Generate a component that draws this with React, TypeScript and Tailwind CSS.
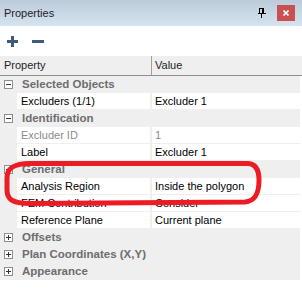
import React from "react";

const font = { fontFamily: '"Liberation Sans", Arial, sans-serif' };

function Expander({ open }: { open: boolean }) {
  return (
    <div className="w-[9px] h-[9px] border border-[#8e8f8f] bg-white relative flex items-center justify-center">
      <div className="w-[5px] h-[1px] bg-[#333] absolute" />
      {!open && <div className="w-[1px] h-[5px] bg-[#333] absolute" />}
    </div>
  );
}

function Category({ label, open }: { label: string; open: boolean }) {
  return (
    <div className="h-[17px] flex items-center bg-[#efefef]">
      <div className="w-[17px] pl-[4px] flex items-center">
        <Expander open={open} />
      </div>
      <span className="pl-[5px] text-[11.5px] font-bold text-[#6d6d6d] leading-[17px]">{label}</span>
    </div>
  );
}

function Prop({ name, value, readOnly }: { name: string; value: string; readOnly?: boolean }) {
  const c = readOnly ? "text-[#8a8a8a]" : "text-black";
  return (
    <div className="h-[17px] flex bg-[#efefef] pb-[1px]">
      <div className="w-[17px]" />
      <div className={`w-[133px] bg-white pl-[4px] text-[11px] leading-[16px] ${c}`}>{name}</div>
      <div className="w-[2px]" />
      <div className={`flex-1 bg-white pl-[3px] text-[11px] leading-[16px] ${c}`}>{value}</div>
    </div>
  );
}

export default function App() {
  return (
    <div className="relative w-[302px] h-[289px] bg-white overflow-hidden" style={font}>
      {/* Title bar */}
      <div className="h-[26px] flex items-center bg-gradient-to-b from-[#bccbdb] to-[#d7e3ef]">
        <span className="pl-[4px] text-[11px] text-[#1e1e1e]">Properties</span>
        <div className="flex-1" />
        <svg width="8" height="10" viewBox="0 0 8 10" className="mr-[11px]">
          <rect x="1.5" y="0.5" width="4" height="5" fill="none" stroke="black" />
          <rect x="4" y="0" width="2" height="6" fill="black" />
          <rect x="0" y="5" width="8" height="1" fill="black" />
          <rect x="3" y="6" width="1" height="4" fill="black" />
        </svg>
        <div className="w-[18px] h-[16px] bg-[#c75050] mr-[7px] flex items-center justify-center">
          <svg width="6" height="6" viewBox="0 0 6 6">
            <path d="M0.5 0.5 L5.5 5.5 M5.5 0.5 L0.5 5.5" stroke="white" strokeWidth="1.6" />
          </svg>
        </div>
      </div>
      {/* Toolbar */}
      <div className="h-[30px] flex items-center bg-white">
        <svg width="11" height="11" viewBox="0 0 11 11" className="ml-[7px]">
          <rect x="4" y="0" width="3" height="11" fill="#3e5a7e" />
          <rect x="0" y="4" width="11" height="3" fill="#3e5a7e" />
        </svg>
        <div className="ml-[14px] w-[12px] h-[3px] bg-[#3e5a7e]" />
      </div>
      {/* Header */}
      <div className="h-[19px] flex bg-[#efefef] text-[11px] text-[#1e1e1e]">
        <div className="w-[151px] pl-[4px] leading-[19px]">Property</div>
        <div className="w-[1px] bg-[#a0a0a0]" />
        <div className="flex-1 pl-[3px] leading-[19px]">Value</div>
      </div>
      <div className="h-[1px] bg-[#8f8f8f]" />
      {/* Grid */}
      <div className="w-[300px]">
        <Category label="Selected Objects" open />
        <Prop name="Excluders (1/1)" value="Excluder 1" />
        <Category label="Identification" open />
        <Prop name="Excluder ID" value="1" readOnly />
        <Prop name="Label" value="Excluder 1" />
        <Category label="General" open />
        <Prop name="Analysis Region" value="Inside the polygon" />
        <Prop name="FEM Contribution" value="Consider" />
        <Prop name="Reference Plane" value="Current plane" />
        <Category label="Offsets" open={false} />
        <Category label="Plan Coordinates (X,Y)" open={false} />
        <Category label="Appearance" open={false} />
      </div>
      {/* Red annotation */}
      <svg className="absolute left-0 top-0 pointer-events-none" width="302" height="289">
        <path
          d="M 30 163.5 L 248 163.5 C 256 164, 259 170, 259 180 C 259 194, 255 201, 245 202 L 30 203.5 C 12 203.5, 7 199, 7 190 L 7 178 C 7 168, 14 163.5, 30 163.5 Z"
          fill="none"
          stroke="#ed1c24"
          strokeWidth="5"
        />
      </svg>
    </div>
  );
}
